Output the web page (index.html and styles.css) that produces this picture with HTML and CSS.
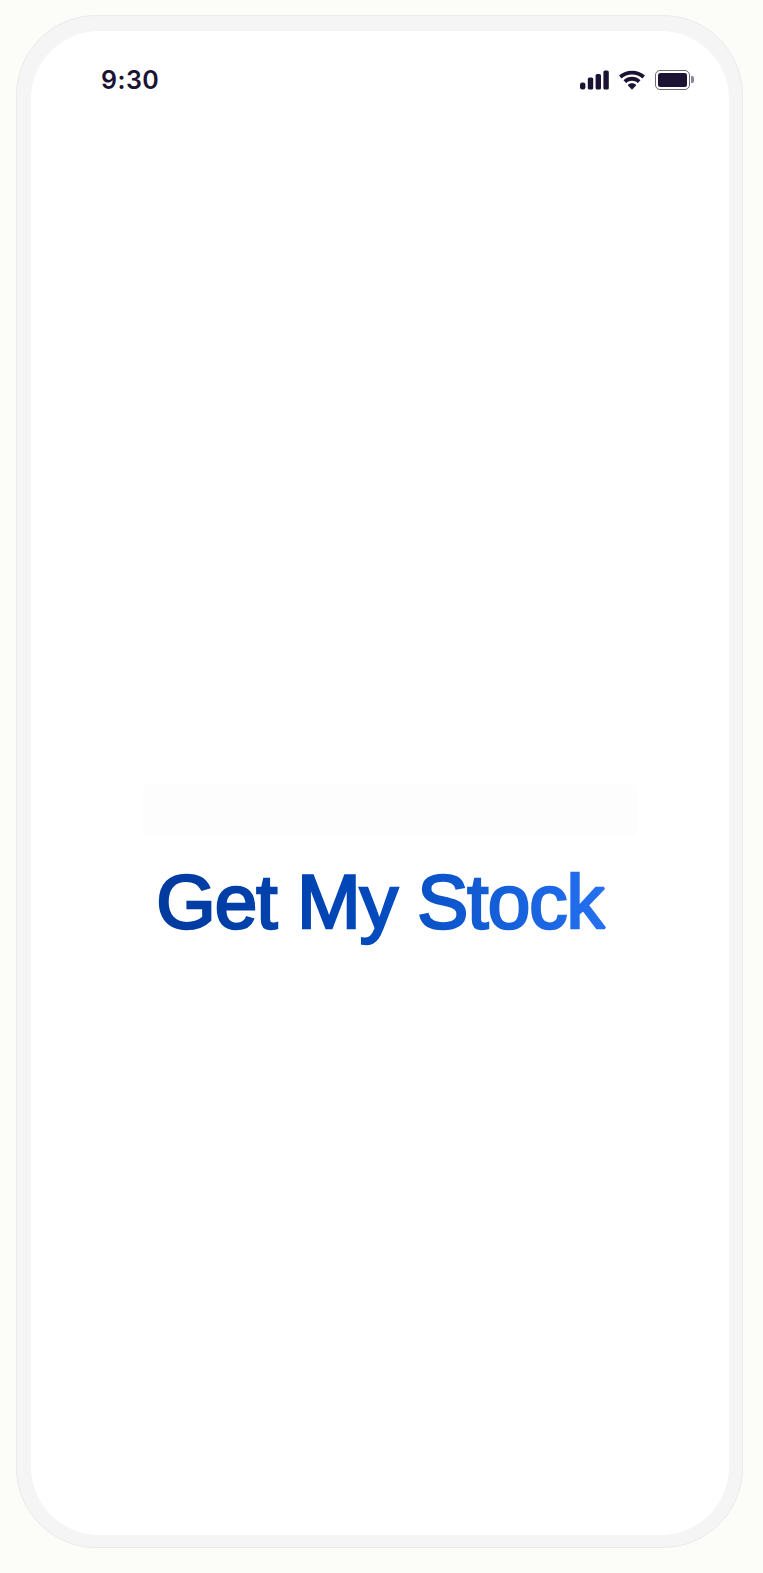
FILE: index.html
```html
<!DOCTYPE html>
<html lang="en">
<head>
<meta charset="utf-8">
<title>Get My Stock</title>
<link rel="stylesheet" href="styles.css">
</head>
<body>
<main class="device">
  <div class="screen">
    <header class="status">
      <span class="time">9:30</span>
      <div class="status-icons">
        <svg class="signal" width="29" height="20" viewBox="0 0 29 20" aria-hidden="true">
          <rect x="0" y="12.5" width="5.4" height="7" rx="2.2"/>
          <rect x="7.8" y="7.5" width="5.4" height="12" rx="1.6"/>
          <rect x="15.6" y="4" width="5.4" height="15.5" rx="1.6"/>
          <rect x="23.4" y="0.5" width="5.4" height="19" rx="1.6"/>
        </svg>
        <svg class="wifi" width="26" height="20" viewBox="0 0 26 20" aria-hidden="true">
          <path d="M1.3 7C7.8 1.2 18.2 1.2 24.7 7" />
          <path d="M5.8 11.6C10 7.8 16 7.8 20.2 11.6" />
          <path class="wifi-dot" d="M8.6 15C11.2 12.8 14.8 12.8 17.4 15L13 19.8Z" />
        </svg>
        <div class="battery"><div class="battery-fill"></div></div>
      </div>
    </header>
    <div class="splash">
      <div class="ghost"></div>
      <svg class="logo" width="480" height="94" viewBox="0 0 480 94" role="img" aria-label="Get My Stock">
        <defs>
          <linearGradient id="logo-gradient" gradientUnits="userSpaceOnUse" x1="16" y1="0" x2="464" y2="0">
            <stop offset="0" stop-color="#003a9e"/>
            <stop offset="0.45" stop-color="#0047b8"/>
            <stop offset="1" stop-color="#2470f0"/>
          </linearGradient>
        </defs>
        <text class="logo-text" x="240" y="75" text-anchor="middle">Get My Stock</text>
      </svg>
    </div>
  </div>
</main>
</body>
</html>
```
FILE: styles.css
```css
* { box-sizing: border-box; }
html, body { margin: 0; height: 100%; }
body {
  background: #fcfcf8;
  padding: 15px 20px 25px 16px;
  height: 1573px;
  overflow: hidden;
}
.device {
  height: 100%;
  background: #f5f5f6;
  border: 1px solid #ebebeb;
  border-radius: 80px;
  padding: 15px 13px 12px 14px;
}
.screen {
  height: 100%;
  background: #fff;
  border-radius: 68px;
  display: flex;
  flex-direction: column;
}
.status {
  display: flex;
  justify-content: space-between;
  align-items: center;
  padding: 35px 39px 0 70px;
  height: 62px;
}
.time {
  font: 600 25px/28px "Inter", sans-serif;
  color: #1a1333;
  letter-spacing: 0.5px;
}
.status-icons { display: flex; align-items: center; gap: 10px; }
.signal { fill: #1a1333; display: block; }
.wifi { display: block; fill: none; stroke: #1a1333; stroke-width: 3.8; }
.wifi-dot { fill: #1a1333; stroke: none; }
.battery {
  position: relative;
  width: 35px;
  height: 20px;
  border: 1.5px solid #6b6780;
  border-radius: 5px;
  padding: 2px;
}
.battery::after {
  content: "";
  position: absolute;
  right: -4.5px;
  top: 5px;
  width: 2.5px;
  height: 7px;
  background: #8b8799;
  border-radius: 0 2px 2px 0;
}
.battery-fill { height: 100%; background: #1a1333; border-radius: 2.5px; }
.splash {
  display: flex;
  flex-direction: column;
  align-items: center;
  padding-top: 690px;
}
.ghost {
  width: 494px;
  height: 52px;
  margin-left: 20px;
  background: #fdfdfd;
  border-radius: 4px;
}
.logo { margin-top: 18px; display: block; }
.logo-text {
  font: 400 76.5px "Liberation Sans", Arial, sans-serif;
  letter-spacing: -0.95px;
  fill: url(#logo-gradient);
  stroke: url(#logo-gradient);
  stroke-width: 2.6px;
  stroke-linejoin: miter;
  stroke-miterlimit: 2;
}
```
